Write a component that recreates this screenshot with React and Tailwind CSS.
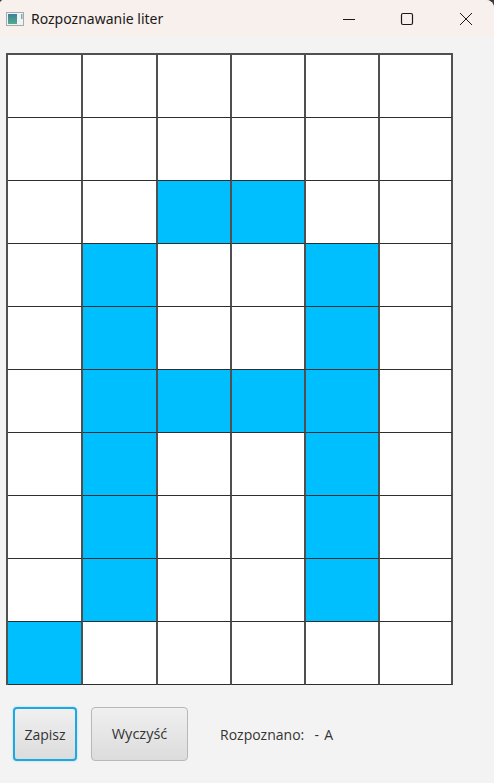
const FILLED = ["2-2", "2-3", "3-1", "3-4", "4-1", "4-4", "5-1", "5-2", "5-3", "5-4", "6-1", "6-4", "7-1", "7-4", "8-1", "8-4", "9-0"];

function Cell({ on }) {
  return (
    <div className={`h-[63px] border-r-2 border-r-[#505050] border-b border-b-[#2e2e2e] ${on ? "bg-[#00bfff]" : "bg-white"}`} />
  );
}

export default function App() {
  const rows = [...Array(10).keys()];
  const cols = [...Array(6).keys()];

  return (
    <div className="w-[494px] h-[783px] bg-[#3a3a3a]">
      <div className="w-full h-full rounded-tl-[4px] rounded-tr-[8px] bg-[#f3f3f3] flex flex-col overflow-hidden text-[14px] text-[#333333] font-['Open_Sans','Noto_Sans',sans-serif]">
        {/* title bar */}
        <div className="h-[37px] shrink-0 bg-[#f8f0ec] flex items-center pl-[6px]">
          <svg width="18" height="14" viewBox="0 0 18 14" className="shrink-0">
            <defs>
              <linearGradient id="appIcon" x1="0" y1="0" x2="0" y2="1">
                <stop offset="0" stopColor="#3f7fa0" />
                <stop offset="1" stopColor="#4fae86" />
              </linearGradient>
            </defs>
            <rect x="0.5" y="0.5" width="17" height="13" fill="#f1f3f3" stroke="#a3abaf" />
            <rect x="2" y="2" width="9" height="10" fill="url(#appIcon)" />
            <rect x="15" y="2" width="1.5" height="5" fill="#7fa9b5" />
          </svg>
          <span className="ml-[7px] text-[#1a1a1a] font-['Noto_Sans',sans-serif]">Rozpoznawanie liter</span>
          <div className="ml-auto flex items-center">
            <svg width="14" height="14" viewBox="0 0 14 14" className="mr-[44px]">
              <path d="M1 7.5h12" stroke="#1a1a1a" strokeWidth="1" />
            </svg>
            <svg width="14" height="14" viewBox="0 0 14 14" className="mr-[45px]">
              <rect x="1.5" y="1.5" width="11" height="11" rx="1.5" fill="none" stroke="#1a1a1a" strokeWidth="1.2" />
            </svg>
            <svg width="14" height="14" viewBox="0 0 14 14" className="mr-[21px]">
              <path d="M1 1l12 12M13 1L1 13" stroke="#1a1a1a" strokeWidth="1" />
            </svg>
          </div>
        </div>

        {/* letter grid */}
        <div className="mt-[16px] ml-[6px] w-[447px] border-l-2 border-l-[#505050] border-t-2 border-t-[#505050] grid grid-cols-[75px_75px_74px_74px_74px_73px]">
          {rows.map((r) =>
            cols.map((c) => <Cell key={`${r}-${c}`} on={FILLED.includes(`${r}-${c}`)} />)
          )}
        </div>

        {/* controls */}
        <div className="mt-[22px] ml-[13px] flex items-center">
          <button className="w-[64px] h-[54px] rounded-[4px] border-2 border-[#1fa8e0] shadow-[0_0_2px_#8fd4f0] bg-gradient-to-b from-[#f0f0f0] to-[#dcdcdc]">
            Zapisz
          </button>
          <button className="ml-[14px] w-[97px] h-[54px] rounded-[4px] border border-[#b8b8b8] bg-gradient-to-b from-[#f0f0f0] to-[#dcdcdc] text-[14.5px]">
            Wyczyść
          </button>
          <span className="ml-[32px] whitespace-pre [word-spacing:1.5px]">Rozpoznano:  - A</span>
        </div>
      </div>
    </div>
  );
}
